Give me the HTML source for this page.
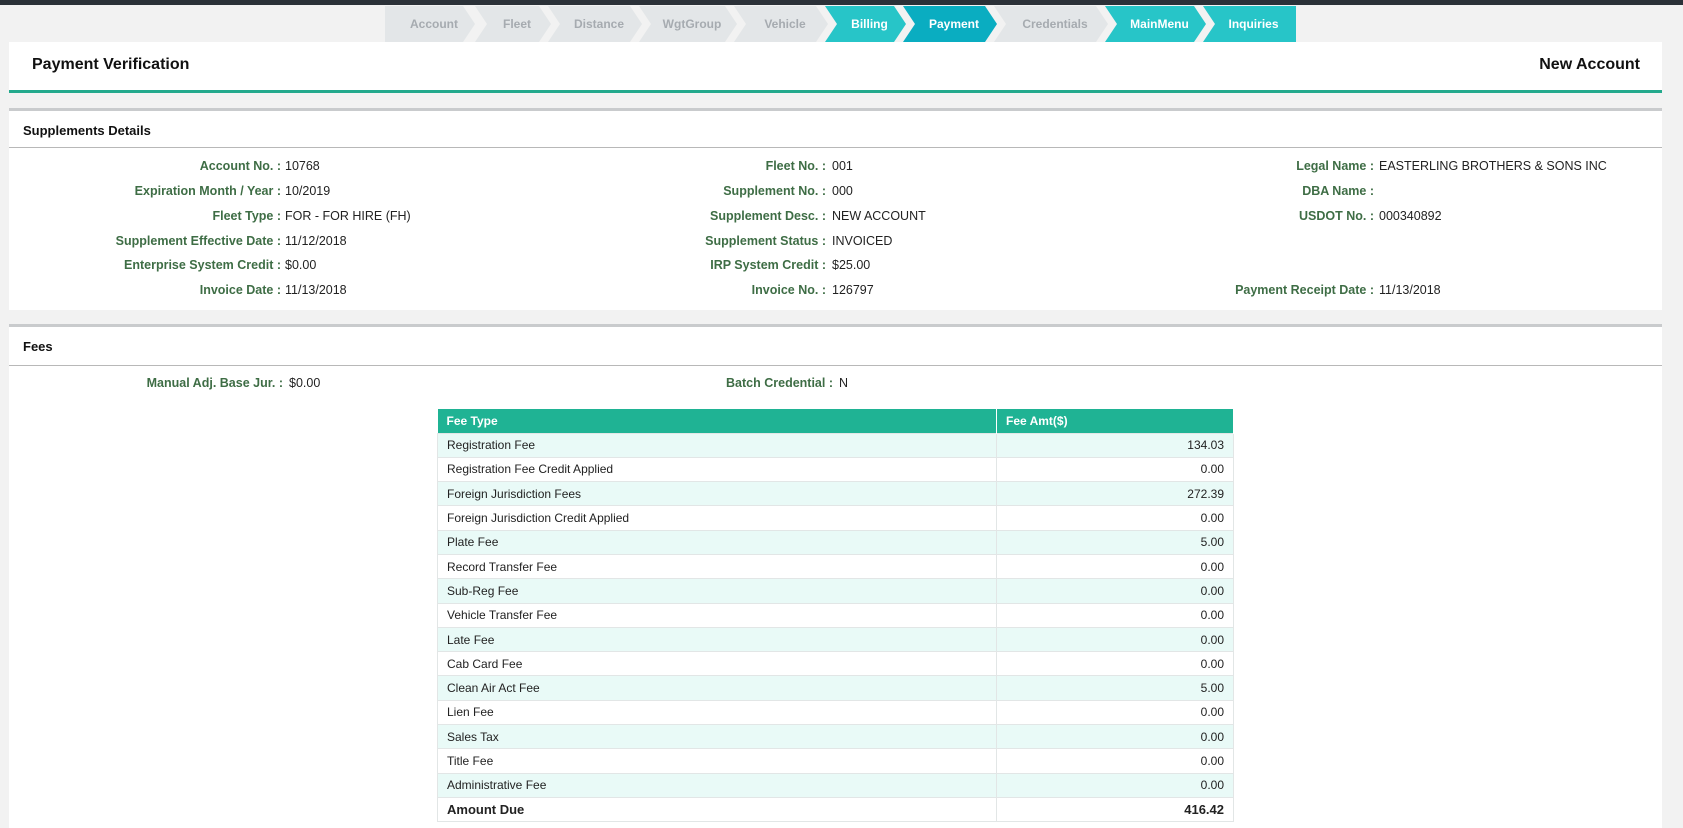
<!DOCTYPE html>
<html><head><meta charset="utf-8">
<style>
*{margin:0;padding:0;box-sizing:border-box}
body{width:1683px;height:828px;overflow:hidden;background:#f2f2f2;font-family:"Liberation Sans",sans-serif;position:relative;color:#222}
.topbar{position:absolute;left:0;top:0;width:1683px;height:5px;background:#2b3138}
.bc{position:absolute;top:6px;height:36px;font-size:12px;font-weight:bold;display:flex;align-items:center;justify-content:center;padding-left:8px;color:#a6abb0;background:#e3e6e8}
.bc.t{background:#27c5c8;color:#fff}
.bc.p{background:#0aadc1;color:#fff}
.panel{position:absolute;left:9px;width:1653px;background:#fff}
.lbl{position:absolute;font-size:12.5px;font-weight:bold;color:#3e6d45;text-align:right;white-space:nowrap}
.val{position:absolute;font-size:12.5px;color:#222;white-space:nowrap}
table{position:absolute;left:437px;top:409px;width:796px;border-collapse:collapse;font-size:12px;table-layout:fixed}
th{background:#1fb394;color:#fff;text-align:left;height:24px;padding:0 9px;font-weight:bold;border-right:1px solid #fff}
td{height:24.3px;padding:0 9px;border:1px solid #e2e6e6}
tr:nth-child(even) td{background:#e9faf7}
tr:nth-child(odd) td{background:#fff}
td:last-child{text-align:right}
tr.tot td{background:#fff;font-weight:bold;font-size:13px}
</style></head><body>
<div class="topbar"></div>

<div class="bc" style="left:385px;width:90px;clip-path:polygon(0 0,78px 0,90px 50%,78px 100%,0 100%)">Account</div>
<div class="bc" style="left:475px;width:76px;clip-path:polygon(0 0,64px 0,76px 50%,64px 100%,0 100%,12px 50%)">Fleet</div>
<div class="bc" style="left:548px;width:94px;clip-path:polygon(0 0,82px 0,94px 50%,82px 100%,0 100%,12px 50%)">Distance</div>
<div class="bc" style="left:639px;width:98px;clip-path:polygon(0 0,86px 0,98px 50%,86px 100%,0 100%,12px 50%)">WgtGroup</div>
<div class="bc" style="left:734px;width:94px;clip-path:polygon(0 0,82px 0,94px 50%,82px 100%,0 100%,12px 50%)">Vehicle</div>
<div class="bc t" style="left:825px;width:81px;clip-path:polygon(0 0,69px 0,81px 50%,69px 100%,0 100%,12px 50%)">Billing</div>
<div class="bc p" style="left:903px;width:94px;clip-path:polygon(0 0,82px 0,94px 50%,82px 100%,0 100%,12px 50%)">Payment</div>
<div class="bc" style="left:994px;width:114px;clip-path:polygon(0 0,102px 0,114px 50%,102px 100%,0 100%,12px 50%)">Credentials</div>
<div class="bc t" style="left:1105px;width:101px;clip-path:polygon(0 0,89px 0,101px 50%,89px 100%,0 100%,12px 50%)">MainMenu</div>
<div class="bc t" style="left:1203px;width:93px;clip-path:polygon(0 0,93px 0,93px 100%,0 100%,12px 50%)">Inquiries</div>

<div class="panel" style="top:42px;border-bottom:3px solid #23a98c;height:51px">
<div style="position:absolute;left:23px;top:14px;font-size:16px;font-weight:bold;color:#111">Payment Verification</div>
<div style="position:absolute;right:22px;top:14px;font-size:16px;font-weight:bold;color:#111">New Account</div>
</div>

<div class="panel" style="top:108px;height:202px;border-top:3px solid #c9cbcd">
<div style="position:absolute;left:14px;top:12px;font-size:13px;font-weight:bold;color:#111">Supplements Details</div>
<div style="position:absolute;left:0;top:36px;width:100%;height:1px;background:#b8b8b8"></div>
</div>

<div class="panel" style="top:324px;height:504px;border-top:3px solid #c9cbcd">
<div style="position:absolute;left:14px;top:12px;font-size:13px;font-weight:bold;color:#111">Fees</div>
<div style="position:absolute;left:0;top:38px;width:100%;height:1px;background:#b8b8b8"></div>
</div>

<div class="lbl" style="right:1402px;top:159px">Account No. :</div><div class="val" style="left:285px;top:159px">10768</div>
<div class="lbl" style="right:1402px;top:184px">Expiration Month / Year :</div><div class="val" style="left:285px;top:184px">10/2019</div>
<div class="lbl" style="right:1402px;top:209px">Fleet Type :</div><div class="val" style="left:285px;top:209px">FOR - FOR HIRE (FH)</div>
<div class="lbl" style="right:1402px;top:234px">Supplement Effective Date :</div><div class="val" style="left:285px;top:234px">11/12/2018</div>
<div class="lbl" style="right:1402px;top:258px">Enterprise System Credit :</div><div class="val" style="left:285px;top:258px">$0.00</div>
<div class="lbl" style="right:1402px;top:283px">Invoice Date :</div><div class="val" style="left:285px;top:283px">11/13/2018</div>

<div class="lbl" style="right:857px;top:159px">Fleet No. :</div><div class="val" style="left:832px;top:159px">001</div>
<div class="lbl" style="right:857px;top:184px">Supplement No. :</div><div class="val" style="left:832px;top:184px">000</div>
<div class="lbl" style="right:857px;top:209px">Supplement Desc. :</div><div class="val" style="left:832px;top:209px">NEW ACCOUNT</div>
<div class="lbl" style="right:857px;top:234px">Supplement Status :</div><div class="val" style="left:832px;top:234px">INVOICED</div>
<div class="lbl" style="right:857px;top:258px">IRP System Credit :</div><div class="val" style="left:832px;top:258px">$25.00</div>
<div class="lbl" style="right:857px;top:283px">Invoice No. :</div><div class="val" style="left:832px;top:283px">126797</div>

<div class="lbl" style="right:309px;top:159px">Legal Name :</div><div class="val" style="left:1379px;top:159px">EASTERLING BROTHERS &amp; SONS INC</div>
<div class="lbl" style="right:309px;top:184px">DBA Name :</div>
<div class="lbl" style="right:309px;top:209px">USDOT No. :</div><div class="val" style="left:1379px;top:209px">000340892</div>
<div class="lbl" style="right:309px;top:283px">Payment Receipt Date :</div><div class="val" style="left:1379px;top:283px">11/13/2018</div>

<div class="lbl" style="right:1400px;top:376px">Manual Adj. Base Jur. :</div><div class="val" style="left:289px;top:376px">$0.00</div>
<div class="lbl" style="right:850px;top:376px">Batch Credential :</div><div class="val" style="left:839px;top:376px">N</div>

<table>
<colgroup><col style="width:559px"><col style="width:237px"></colgroup>
<tr><th>Fee Type</th><th>Fee Amt($)</th></tr>
<tr><td>Registration Fee</td><td>134.03</td></tr>
<tr><td>Registration Fee Credit Applied</td><td>0.00</td></tr>
<tr><td>Foreign Jurisdiction Fees</td><td>272.39</td></tr>
<tr><td>Foreign Jurisdiction Credit Applied</td><td>0.00</td></tr>
<tr><td>Plate Fee</td><td>5.00</td></tr>
<tr><td>Record Transfer Fee</td><td>0.00</td></tr>
<tr><td>Sub-Reg Fee</td><td>0.00</td></tr>
<tr><td>Vehicle Transfer Fee</td><td>0.00</td></tr>
<tr><td>Late Fee</td><td>0.00</td></tr>
<tr><td>Cab Card Fee</td><td>0.00</td></tr>
<tr><td>Clean Air Act Fee</td><td>5.00</td></tr>
<tr><td>Lien Fee</td><td>0.00</td></tr>
<tr><td>Sales Tax</td><td>0.00</td></tr>
<tr><td>Title Fee</td><td>0.00</td></tr>
<tr><td>Administrative Fee</td><td>0.00</td></tr>
<tr class="tot"><td>Amount Due</td><td>416.42</td></tr>
</table>
</body></html>
